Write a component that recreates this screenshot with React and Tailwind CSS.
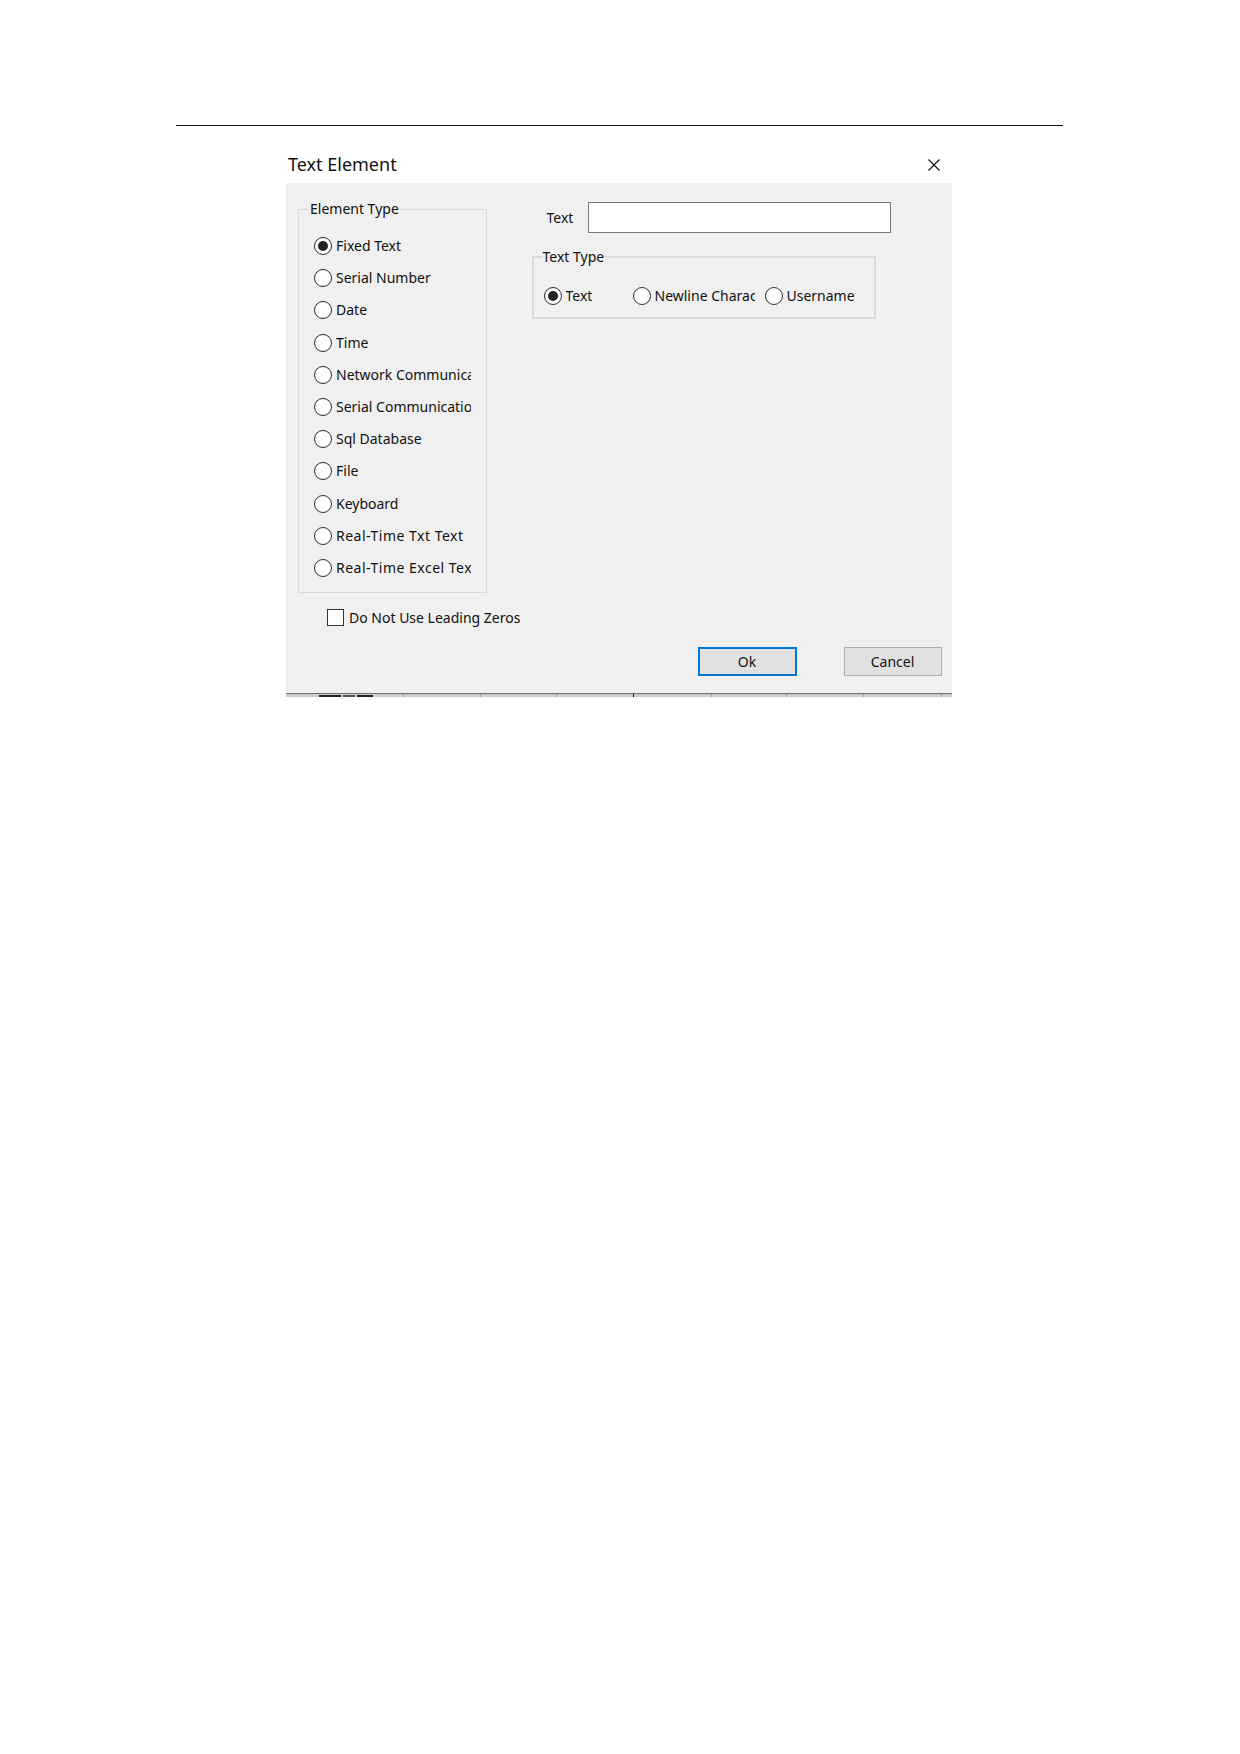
import React from "react";

const elementTypes = [
  { label: "Fixed Text" },
  { label: "Serial Number" },
  { label: "Date" },
  { label: "Time" },
  { label: "Network Communication" },
  { label: "Serial Communication" },
  { label: "Sql Database" },
  { label: "File" },
  { label: "Keyboard" },
  { label: "Real-Time Txt Text", wide: true },
  { label: "Real-Time Excel Text", wide: true },
];

function Radio({ checked }) {
  return (
    <span className="w-[18px] h-[18px] shrink-0 rounded-full border-[1.5px] border-[#2b2b2b] bg-white flex items-center justify-center">
      {checked ? <span className="w-[10px] h-[10px] rounded-full bg-[#222]" /> : null}
    </span>
  );
}

function RadioRow({ label, checked, textWidth, wide }) {
  return (
    <div className="flex items-center gap-[4px] h-[32.2px]">
      <Radio checked={checked} />
      <span
        className={`${textWidth} overflow-hidden whitespace-nowrap leading-[20px] ${wide ? "tracking-[0.5px]" : ""}`}
      >
        {label}
      </span>
    </div>
  );
}

export default function App() {
  return (
    <div
      className="w-[1240px] h-[1754px] bg-white text-[#111] pt-[125px]"
      style={{ fontFamily: '"Noto Sans", "Open Sans", sans-serif' }}
    >
      {/* page rule */}
      <div className="ml-[176px] w-[887px] h-px bg-[#111]" />

      <div className="ml-[286px] w-[666px]">
        {/* title row */}
        <div className="h-[57px] flex items-end pb-[9px] pl-[2px] pr-[12px]">
          <div className="flex-1 flex items-center justify-between h-[20px]">
            <span className="text-[18px] leading-[20px]">Text Element</span>
            <svg width="12" height="12" viewBox="0 0 12 12" className="mt-[1px]">
              <path d="M0.5 0.5 L11.5 11.5 M11.5 0.5 L0.5 11.5" stroke="#111" strokeWidth="1.1" />
            </svg>
          </div>
        </div>

        {/* body */}
        <div className="h-[510px] bg-[#f0f0f0] text-[14px] flex flex-col">
          <div className="flex">
            {/* element type group */}
            <div className="pl-[12px] pt-[16px]">
              <fieldset className="w-[189px] h-[394px] border border-[#d9d9d9] pl-[15px] pt-[11px]">
                <legend className="-ml-[5px] px-[1px] leading-[20px]">Element Type</legend>
                {elementTypes.map((t, i) => (
                  <RadioRow key={t.label} label={t.label} wide={t.wide} checked={i === 0} textWidth="w-[135px]" />
                ))}
              </fieldset>
            </div>

            {/* right column */}
            <div className="ml-[44.5px] pt-[19px]">
              <div className="flex items-center">
                <span className="w-[56px] pl-[15px] leading-[20px]">Text</span>
                <div className="w-[303px] h-[31px] bg-white border border-[#7a7a7a]" />
              </div>
              <fieldset className="mt-[14px] w-[344px] h-[72px] border-2 border-[#dcdcdc] pl-[10px] pt-[13px]">
                <legend className="-ml-[2px] px-[1px] leading-[20px]">Text Type</legend>
                <div className="flex">
                  <div className="w-[89px]">
                    <RadioRow label="Text" checked textWidth="w-[60px]" />
                  </div>
                  <div className="w-[132px]">
                    <RadioRow label="Newline Character" textWidth="w-[100px]" />
                  </div>
                  <RadioRow label="Username" textWidth="w-[80px]" />
                </div>
              </fieldset>
            </div>
          </div>

          {/* checkbox */}
          <div className="mt-[16px] pl-[41px] flex items-center gap-[5px] h-[17px]">
            <span className="w-[17px] h-[17px] bg-white border border-[#333]" />
            <span className="leading-[20px]">Do Not Use Leading Zeros</span>
          </div>

          {/* buttons */}
          <div className="mt-[21px] flex justify-end gap-[47px] pr-[10.5px]">
            <button className="w-[99px] h-[29px] bg-[#e1e1e1] border-2 border-[#0078d7] leading-[20px]">Ok</button>
            <button className="w-[98px] h-[29px] bg-[#e1e1e1] border border-[#adadad] leading-[20px]">Cancel</button>
          </div>
        </div>

        {/* cut-off table strip below the dialog */}
        <div className="border-t border-[#6f6f6f] h-[4px] bg-[#cdcdcd] flex">
          <div className="w-[118px] border-r border-[#9a9a9a] pl-[33px] flex gap-[2px] pt-[1px]">
            <div className="w-[22px] h-[2px] bg-[#222]" />
            <div className="w-[12px] h-[2px] bg-[#555]" />
            <div className="w-[16px] h-[2px] bg-[#222]" />
          </div>
          <div className="w-[77px] border-r border-[#9a9a9a]" />
          <div className="w-[76px] border-r border-[#9a9a9a]" />
          <div className="w-[77px] border-r border-[#111]" />
          <div className="w-[78px] border-r border-[#9a9a9a]" />
          <div className="w-[75px] border-r border-[#9a9a9a]" />
          <div className="w-[77px] border-r border-[#9a9a9a]" />
          <div className="w-[78px] border-r border-[#9a9a9a]" />
        </div>
      </div>
    </div>
  );
}
